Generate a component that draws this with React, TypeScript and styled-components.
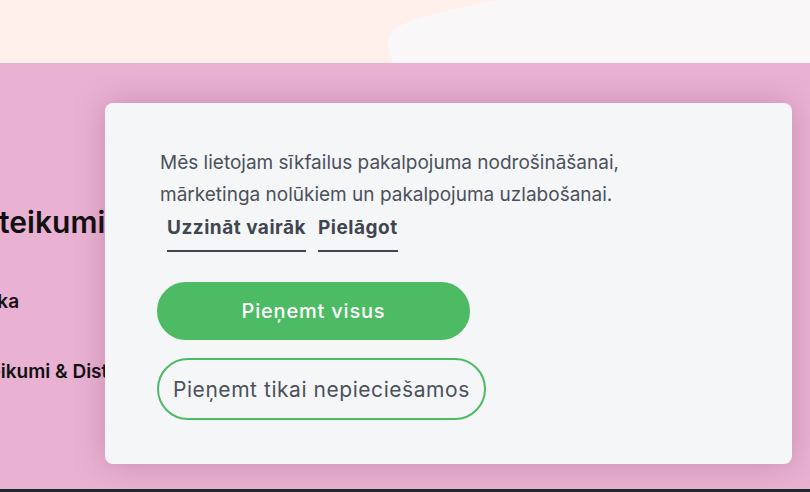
import React from "react";
import styled, { createGlobalStyle } from "styled-components";

const GlobalStyle = createGlobalStyle`
  html, body {
    margin: 0;
    padding: 0;
    overflow: hidden;
  }
  body {
    font-family: Inter, "Noto Sans", "Liberation Sans", sans-serif;
    background: #e9b2d2;
  }
`;

const Page = styled.div`
  width: 810px;
  height: 492px;
  display: flex;
  flex-direction: column;
  overflow: hidden;
  position: relative;
`;

const Hero = styled.div`
  position: relative;
  height: 63px;
  background: #fff0eb;
  flex-shrink: 0;
`;

const Blob = styled.svg`
  position: absolute;
  inset: 0;
  width: 100%;
  height: 100%;
`;

const FooterBand = styled.div`
  flex: 1;
  background: #e9b2d2;
  padding: 139px 0 0;
`;

const FooterColumn = styled.div`
  margin-left: -48px;
  display: flex;
  flex-direction: column;
  gap: 46px;
  color: #111111;
`;

const ColumnTitle = styled.h3`
  margin: 0 0 2px;
  padding-left: 6px;
  font-size: 30px;
  line-height: 40px;
  font-weight: 600;
  white-space: nowrap;
`;

const ColumnLink = styled.a<{ $indent?: number }>`
  padding-left: ${(p) => p.$indent ?? 0}px;
  font-size: 19px;
  line-height: 24px;
  font-weight: 600;
  white-space: nowrap;
`;

const BottomStrip = styled.div`
  height: 3px;
  background: #1b2a2e;
  flex-shrink: 0;
`;

const Modal = styled.div`
  position: absolute;
  left: 105px;
  top: 103px;
  width: 687px;
  box-sizing: border-box;
  padding: 44px 52px 44px;
  background: #f5f6f8;
  border-radius: 8px;
  box-shadow: 0 0 32px rgba(120, 40, 90, 0.28);
  display: flex;
  flex-direction: column;
  align-items: flex-start;
`;

const Message = styled.p`
  margin: 0;
  padding-left: 3px;
  font-size: 19px;
  line-height: 32px;
  color: #4b515b;
`;

const LinkRow = styled.div`
  display: flex;
  gap: 12px;
  margin: 5px 0 0 10px;
`;

const TextLink = styled.a`
  font-size: 19px;
  line-height: 24px;
  font-weight: 700;
  letter-spacing: 0.5px;
  color: #3f4650;
  padding-bottom: 10px;
  border-bottom: 2px solid #3f4650;
  cursor: pointer;
`;

const Button = styled.button<{ $primary?: boolean }>`
  box-sizing: border-box;
  height: ${(p) => (p.$primary ? "58px" : "62px")};
  width: ${(p) => (p.$primary ? "313px" : "auto")};
  padding: 0 14px;
  border-radius: 31px;
  border: 2px solid #4cbb63;
  background: ${(p) => (p.$primary ? "#4cbb63" : "transparent")};
  color: ${(p) => (p.$primary ? "#ffffff" : "#4b515b")};
  font-family: inherit;
  font-size: ${(p) => (p.$primary ? "20px" : "21px")};
  letter-spacing: ${(p) => (p.$primary ? "0.8px" : "0.55px")};
  font-weight: ${(p) => (p.$primary ? 500 : 400)};
  margin-top: ${(p) => (p.$primary ? "30px" : "18px")};
  cursor: pointer;
`;

export default function App() {
  return (
    <>
      <GlobalStyle />
      <Page>
        <Hero>
          <Blob viewBox="0 0 810 63" preserveAspectRatio="none">
            <path
              d="M497 0 C445 11 402 19 391 33 C385 42 388 55 394 63 L810 63 L810 0 Z"
              fill="#f9f7f7"
            />
          </Blob>
        </Hero>
        <FooterBand>
          <FooterColumn>
            <ColumnTitle>Noteikumi</ColumnTitle>
            <ColumnLink>Politika</ColumnLink>
            <ColumnLink $indent={5}>Noteikumi &amp; Distances līgums</ColumnLink>
          </FooterColumn>
        </FooterBand>
        <BottomStrip />
        <Modal>
          <Message>
            Mēs lietojam sīkfailus pakalpojuma nodrošināšanai,
            <br />
            mārketinga nolūkiem un pakalpojuma uzlabošanai.
          </Message>
          <LinkRow>
            <TextLink>Uzzināt vairāk</TextLink>
            <TextLink>Pielāgot</TextLink>
          </LinkRow>
          <Button $primary>Pieņemt visus</Button>
          <Button>Pieņemt tikai nepieciešamos</Button>
        </Modal>
      </Page>
    </>
  );
}
